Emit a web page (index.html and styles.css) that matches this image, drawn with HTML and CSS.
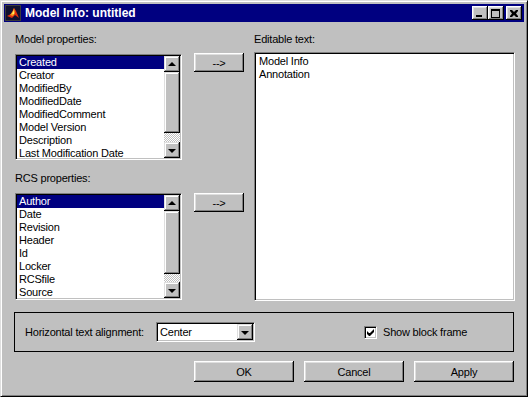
FILE: index.html
```html
<!DOCTYPE html>
<html lang="en">
<head>
    <meta charset="UTF-8">
    <title>Model Info: untitled</title>
    <link rel="stylesheet" href="styles.css">
</head>
<body>
    <div class="window">
        <div class="titlebar">
            <svg class="app-icon" width="16" height="16" viewBox="0 0 16 16">
                <rect width="16" height="16" fill="#3a3a3a"/>
                <rect x="1" y="1" width="14" height="14" fill="#101030"/>
                <polygon points="2,11 6,9 9,3 11,6 14,13 10,10 7,13" fill="#e03010"/>
                <polygon points="5,10 8,6 9,3 10,8 8,11" fill="#f8a020"/>
                <polygon points="7,9 9,5 9,9" fill="#fff060"/>
            </svg>
            <span class="title">Model Info: untitled</span>
            <div class="title-btns">
                <span class="tbtn"><span class="ico-min"></span></span>
                <span class="tbtn"><span class="ico-max"></span></span>
                <span class="tbtn tbtn-close">
                    <svg width="8" height="7" viewBox="0 0 8 7">
                        <path d="M0 0h2l2 2 2-2h2v1l-2 2.5 2 2.5v1h-2l-2-2-2 2h-2v-1l2-2.5-2-2.5z" fill="#000"/>
                    </svg>
                </span>
            </div>
        </div>

        <div class="content">
            <div class="main">
                <div class="left-col">
                    <div class="label">Model properties:</div>
                    <div class="listbox list-model">
                        <div class="items">
                            <div class="item selected">Created</div>
                            <div class="item">Creator</div>
                            <div class="item">ModifiedBy</div>
                            <div class="item">ModifiedDate</div>
                            <div class="item">ModifiedComment</div>
                            <div class="item">Model Version</div>
                            <div class="item">Description</div>
                            <div class="item">Last Modification Date</div>
                        </div>
                        <div class="scrollbar">
                            <span class="sbtn"><span class="arrow-up"></span></span>
                            <span class="thumb"></span>
                            <span class="track"></span>
                            <span class="sbtn"><span class="arrow-down"></span></span>
                        </div>
                    </div>

                    <div class="label label-rcs">RCS properties:</div>
                    <div class="listbox list-rcs">
                        <div class="items">
                            <div class="item selected">Author</div>
                            <div class="item">Date</div>
                            <div class="item">Revision</div>
                            <div class="item">Header</div>
                            <div class="item">Id</div>
                            <div class="item">Locker</div>
                            <div class="item">RCSfile</div>
                            <div class="item">Source</div>
                        </div>
                        <div class="scrollbar">
                            <span class="sbtn"><span class="arrow-up"></span></span>
                            <span class="thumb thumb-rcs"></span>
                            <span class="track"></span>
                            <span class="sbtn"><span class="arrow-down"></span></span>
                        </div>
                    </div>
                </div>

                <div class="mid-col">
                    <button class="btn btn-add">--&gt;</button>
                    <button class="btn btn-add btn-add-rcs">--&gt;</button>
                </div>

                <div class="right-col">
                    <div class="label">Editable text:</div>
                    <div class="editbox">
                        <div class="item">Model Info</div>
                        <div class="item">Annotation</div>
                    </div>
                </div>
            </div>

            <div class="groupbox">
                <span class="group-label">Horizontal text alignment:</span>
                <div class="select">
                    <span class="select-value">Center</span>
                    <span class="sbtn"><span class="arrow-down"></span></span>
                </div>
                <label class="checkbox">
                    <span class="check-box">
                        <svg width="7" height="7" viewBox="0 0 7 7">
                            <path d="M0 2v3l2 2h1l4-4v-3l-4 4h-1z" fill="#000"/>
                        </svg>
                    </span>
                    Show block frame
                </label>
            </div>

            <div class="actions">
                <button class="btn btn-action">OK</button>
                <button class="btn btn-action">Cancel</button>
                <button class="btn btn-action">Apply</button>
            </div>
        </div>
    </div>
</body>
</html>
```

FILE: styles.css
```css
* {
    margin: 0;
    padding: 0;
    box-sizing: border-box;
}

body {
    background-color: #c0c0c0;
    font-family: "Liberation Sans", Arial, sans-serif;
    font-size: 11px;
    letter-spacing: -0.2px;
    color: #000;
}

.window {
    width: 528px;
    height: 397px;
    padding: 2px;
    background-color: #c0c0c0;
    border: 1px solid;
    border-color: #dfdfdf #000 #000 #dfdfdf;
    box-shadow: inset 1px 1px #fff, inset -1px -1px #808080;
}

/* title bar */
.titlebar {
    height: 18px;
    margin: 1px;
    background-color: #000080;
    display: flex;
    align-items: center;
    color: white;
}

.app-icon {
    margin-left: 1px;
}

.title {
    margin-left: 4px;
    font-weight: bold;
    font-size: 12px;
    letter-spacing: 0;
}

.title-btns {
    margin-left: auto;
    margin-right: 2px;
    display: flex;
}

.tbtn {
    width: 16px;
    height: 14px;
    background-color: #c0c0c0;
    box-shadow: inset -1px -1px #000, inset 1px 1px #fff, inset -2px -2px #808080, inset 2px 2px #dfdfdf;
    display: flex;
    align-items: center;
    justify-content: center;
}

.tbtn-close {
    margin-left: 2px;
}

.ico-min {
    width: 6px;
    height: 2px;
    background-color: #000;
    margin-top: 6px;
    margin-right: 2px;
}

.ico-max {
    width: 9px;
    height: 9px;
    border: 1px solid #000;
    border-top-width: 2px;
    margin-right: 1px;
}

/* content */
.content {
    padding: 10px 8px 0 12px;
}

.main {
    display: flex;
}

.label {
    height: 13px;
    line-height: 13px;
}

.left-col {
    width: 167px;
    display: flex;
    flex-direction: column;
}

.listbox {
    margin-top: 8px;
    width: 167px;
    background-color: white;
    border: 1px solid;
    border-color: #808080 #fff #fff #808080;
    box-shadow: inset 1px 1px #000, inset -1px -1px #c0c0c0;
    padding: 1px;
    display: flex;
    overflow: hidden;
}

.list-model {
    height: 106px;
}

.list-rcs {
    height: 107px;
}

.label-rcs {
    margin-top: 12px;
}

.items {
    flex: 1;
    overflow: hidden;
}

.item {
    height: 13px;
    line-height: 13px;
    padding-left: 2px;
    white-space: nowrap;
}

.selected {
    background-color: #000080;
    color: white;
}

.scrollbar {
    width: 16px;
    display: flex;
    flex-direction: column;
}

.sbtn {
    width: 16px;
    height: 16px;
    flex: none;
    background-color: #c0c0c0;
    box-shadow: inset -1px -1px #000, inset 1px 1px #dfdfdf, inset -2px -2px #808080, inset 2px 2px #fff;
    display: flex;
    align-items: center;
    justify-content: center;
}

.thumb {
    height: 61px;
    flex: none;
    background-color: #c0c0c0;
    box-shadow: inset -1px -1px #000, inset 1px 1px #dfdfdf, inset -2px -2px #808080, inset 2px 2px #fff;
}

.thumb-rcs {
    height: 63px;
}

.track {
    flex: 1;
    background: repeating-conic-gradient(#fff 0 25%, #c0c0c0 0 50%) 0 0 / 2px 2px;
}

.arrow-up {
    width: 0;
    height: 0;
    border-left: 4px solid transparent;
    border-right: 4px solid transparent;
    border-bottom: 4px solid #000;
    margin-top: -1px;
}

.arrow-down {
    width: 0;
    height: 0;
    border-left: 4px solid transparent;
    border-right: 4px solid transparent;
    border-top: 4px solid #000;
    margin-top: 1px;
}

.mid-col {
    width: 50px;
    margin-left: 12px;
    padding-top: 20px;
    display: flex;
    flex-direction: column;
}

.btn {
    font-family: "Liberation Sans", Arial, sans-serif;
    font-size: 11px;
    letter-spacing: -0.2px;
    background-color: #c0c0c0;
    border: none;
    color: #000;
    box-shadow: inset -1px -1px #000, inset 1px 1px #fff, inset -2px -2px #808080, inset 2px 2px #dfdfdf;
}

.btn-add {
    width: 50px;
    height: 19px;
}

.btn-add-rcs {
    margin-top: 121px;
}

.right-col {
    width: 261px;
    margin-left: 10px;
    display: flex;
    flex-direction: column;
}

.editbox {
    margin-top: 6px;
    height: 249px;
    background-color: white;
    border: 1px solid;
    border-color: #808080 #fff #fff #808080;
    box-shadow: inset 1px 1px #000, inset -1px -1px #c0c0c0;
    padding: 2px 0 0 4px;
}

.editbox .item {
    padding-left: 0;
}

/* alignment group */
.groupbox {
    margin: 11px 0 0 -1px;
    width: 500px;
    height: 40px;
    border: 1px solid #000;
    display: flex;
    align-items: center;
    padding-left: 10px;
}

.group-label {
    width: 131px;
}

.select {
    width: 99px;
    height: 20px;
    background-color: white;
    border: 1px solid;
    border-color: #808080 #fff #fff #808080;
    box-shadow: inset 1px 1px #000, inset -1px -1px #c0c0c0;
    padding: 1px;
    display: flex;
    align-items: center;
}

.select-value {
    flex: 1;
    padding-left: 2px;
}

.checkbox {
    margin-left: 109px;
    display: flex;
    align-items: center;
    gap: 6px;
}

.check-box {
    width: 13px;
    height: 13px;
    background-color: white;
    border: 1px solid;
    border-color: #808080 #fff #fff #808080;
    box-shadow: inset 1px 1px #000, inset -1px -1px #c0c0c0;
    display: flex;
    align-items: center;
    justify-content: center;
}

.actions {
    margin-top: 9px;
    width: 500px;
    margin-left: -1px;
    display: flex;
    justify-content: flex-end;
    gap: 10px;
}

.btn-action {
    width: 100px;
    height: 21px;
}
```
